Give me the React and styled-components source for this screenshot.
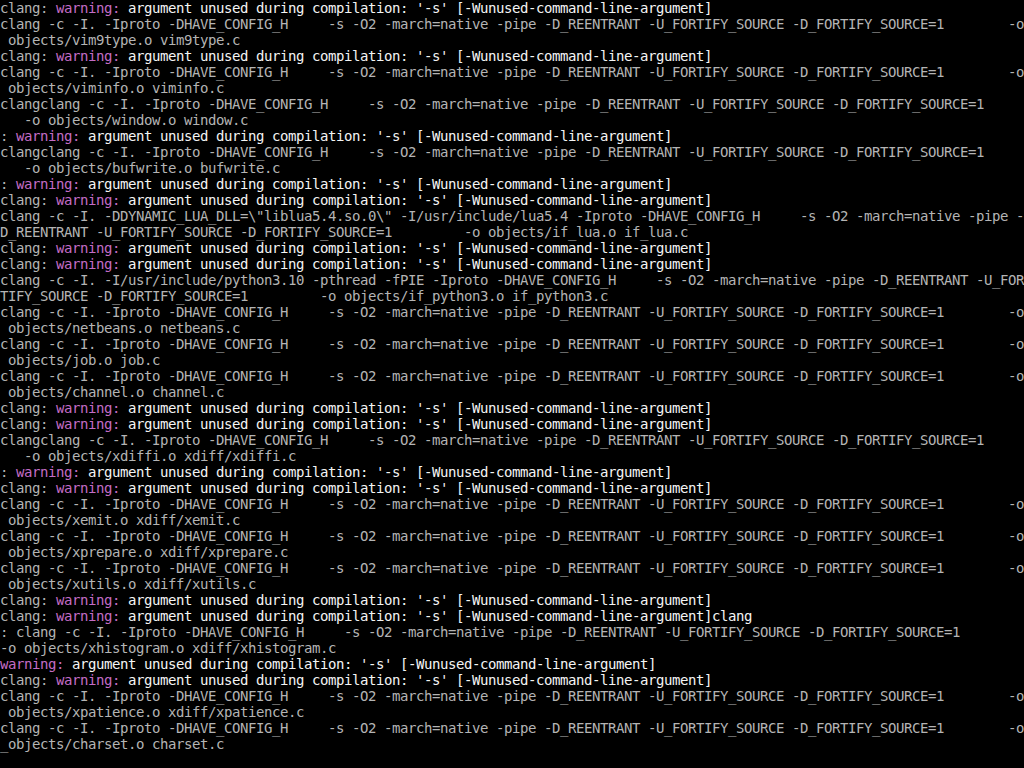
import React from "react";
import styled, { createGlobalStyle } from "styled-components";

const GlobalStyle = createGlobalStyle`
  html, body {
    margin: 0;
    padding: 0;
    background: #000;
  }
`;

const Screen = styled.div`
  width: 1024px;
  height: 768px;
  overflow: hidden;
  background: #000;
  display: flex;
  flex-direction: column;
  font-family: "DejaVu Sans Mono", "Liberation Mono", monospace;
  font-size: 14px;
  letter-spacing: -0.428px;
  color: #b4b4b4;
`;

const Row = styled.div`
  height: 16px;
  line-height: 16px;
  white-space: pre;
  flex: none;
`;

const Seg = styled.span`
  color: ${(p) => (p.$kind === "m" ? "#c46cc6" : p.$kind === "w" ? "#f4f4f4" : "#b4b4b4")};
`;

const CMD =
  "clang -c -I. -Iproto -DHAVE_CONFIG_H     -s -O2 -march=native -pipe -D_REENTRANT -U_FORTIFY_SOURCE -D_FORTIFY_SOURCE=1";
const MSG = " argument unused during compilation: '-s' [-Wunused-command-line-argument]";

const plain = (s) => [["g", s]];
const warn = (prefix = "clang: ", suffix = "") => [
  ["g", prefix],
  ["m", "warning:"],
  ["w", MSG + suffix],
];
const cmdO = () => plain(CMD + "        -o");

const lines = [
  warn(),
  cmdO(),
  plain(" objects/vim9type.o vim9type.c"),
  warn(),
  cmdO(),
  plain(" objects/viminfo.o viminfo.c"),
  plain("clang" + CMD),
  plain("   -o objects/window.o window.c"),
  warn(": "),
  plain("clang" + CMD),
  plain("   -o objects/bufwrite.o bufwrite.c"),
  warn(": "),
  warn(),
  plain(
    'clang -c -I. -DDYNAMIC_LUA_DLL=\\"liblua5.4.so.0\\" -I/usr/include/lua5.4 -Iproto -DHAVE_CONFIG_H     -s -O2 -march=native -pipe -'
  ),
  plain("D_REENTRANT -U_FORTIFY_SOURCE -D_FORTIFY_SOURCE=1         -o objects/if_lua.o if_lua.c"),
  warn(),
  warn(),
  plain(
    "clang -c -I. -I/usr/include/python3.10 -pthread -fPIE -Iproto -DHAVE_CONFIG_H     -s -O2 -march=native -pipe -D_REENTRANT -U_FOR"
  ),
  plain("TIFY_SOURCE -D_FORTIFY_SOURCE=1         -o objects/if_python3.o if_python3.c"),
  cmdO(),
  plain(" objects/netbeans.o netbeans.c"),
  cmdO(),
  plain(" objects/job.o job.c"),
  cmdO(),
  plain(" objects/channel.o channel.c"),
  warn(),
  warn(),
  plain("clang" + CMD),
  plain("   -o objects/xdiffi.o xdiff/xdiffi.c"),
  warn(": "),
  warn(),
  cmdO(),
  plain(" objects/xemit.o xdiff/xemit.c"),
  cmdO(),
  plain(" objects/xprepare.o xdiff/xprepare.c"),
  cmdO(),
  plain(" objects/xutils.o xdiff/xutils.c"),
  warn(),
  warn("clang: ", "clang"),
  plain(": " + CMD),
  plain("-o objects/xhistogram.o xdiff/xhistogram.c"),
  warn(""),
  warn(),
  cmdO(),
  plain(" objects/xpatience.o xdiff/xpatience.c"),
  cmdO(),
  plain("_objects/charset.o charset.c"),
  plain(""),
];

export default function App() {
  return (
    <>
      <GlobalStyle />
      <Screen>
        {lines.map((segs, i) => (
          <Row key={i}>
            {segs.map(([kind, text], j) => (
              <Seg key={j} $kind={kind}>
                {text}
              </Seg>
            ))}
          </Row>
        ))}
      </Screen>
    </>
  );
}
